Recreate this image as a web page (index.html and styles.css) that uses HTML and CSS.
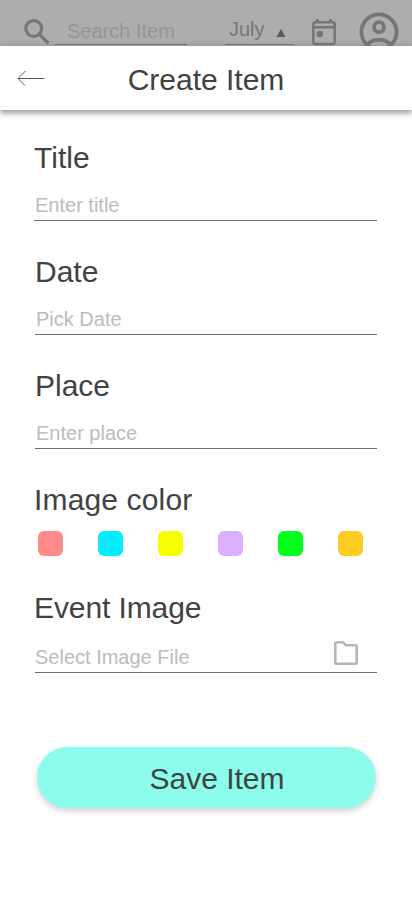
FILE: index.html
```html
<!DOCTYPE html>
<html lang="en">
<head>
<meta charset="utf-8">
<title>Create Item</title>
<link rel="stylesheet" href="styles.css">
</head>
<body>
<div class="topbar">
  <svg class="search-icon" width="26" height="26" viewBox="0 0 26 26"><circle cx="9.7" cy="9.5" r="7.9"/><path d="M15.2 15.2L24.4 24.4"/></svg>
  <div class="search-field">Search Item</div>
  <div class="month"><span>July</span><svg width="10" height="9" viewBox="0 0 10 9"><path d="M5 0L9.5 8H.5z"/></svg></div>
  <svg class="calendar-icon" width="24" height="27" viewBox="0 0 24 27"><rect x="1.3" y="3.3" width="21.4" height="21.8" rx="2"/><path d="M1 8.2H23M5.5 0V4M18.5 0V4"/><circle class="dot" cx="7.8" cy="15.1" r="3.3"/></svg>
  <svg class="user-icon" width="40" height="40" viewBox="0 0 40 40"><circle cx="20" cy="20" r="17.6"/><circle cx="20" cy="15.2" r="5"/><path d="M8 33Q12 27.8 20 27.8T32 33"/></svg>
</div>
<header class="header">
  <svg class="back" width="28" height="16" viewBox="0 0 28 16"><path d="M27.5 8.5H1.2M8.5 1L1 8.5L8 15.5"/></svg>
  <h1>Create Item</h1>
</header>
<main class="form">
  <section class="field field-title"><h2>Title</h2><div class="input">Enter title</div></section>
  <section class="field"><h2>Date</h2><div class="input">Pick Date</div></section>
  <section class="field"><h2>Place</h2><div class="input">Enter place</div></section>
  <section class="colors">
    <h2>Image color</h2>
    <div class="swatches"><i class="coral"></i><i class="cyan"></i><i class="yellow"></i><i class="lilac"></i><i class="green"></i><i class="amber"></i></div>
  </section>
  <section class="field file"><h2>Event Image</h2>
    <div class="input"><span>Select Image File</span><svg width="24" height="24" viewBox="0 0 24 24"><path d="M1.3 2.8Q1.3 1.3 2.8 1.3H9L12 4.3H21.2Q22.7 4.3 22.7 5.8V21.2Q22.7 22.7 21.2 22.7H2.8Q1.3 22.7 1.3 21.2Z"/></svg></div>
  </section>
  <button class="save">Save Item</button>
</main>
</body>
</html>
```
FILE: styles.css
```css
* { box-sizing: border-box; }
body {
  margin: 0;
  height: 915px;
  overflow: hidden;
  background: #fff;
  color: #424242;
  font-family: "Liberation Sans", Arial, sans-serif;
}
svg { display: block; flex: none; fill: none; }
h1, h2 { margin: 0; font-size: 30px; line-height: 30px; font-weight: 400; }

.topbar {
  display: flex;
  align-items: flex-start;
  height: 46px;
  padding-left: 24px;
  overflow: hidden;
  background: linear-gradient(#adadad 0, #adadad 40px, #a6a6a6 46px);
  color: #767676;
  font-size: 20px;
  line-height: 20px;
}
.topbar svg { stroke: #767676; }
.search-icon { margin-top: 19px; stroke-width: 3.2; }
.search-field {
  width: 132px;
  height: 24px;
  margin: 21px 0 0 5px;
  padding-left: 12px;
  border-bottom: 1px solid #767676;
  color: #969696;
}
.month {
  display: flex;
  width: 69px;
  height: 26px;
  margin: 19px 0 0 38px;
  padding-left: 4px;
  border-bottom: 1px solid #767676;
}
.topbar .month svg { margin: 10px 0 0 11px; fill: #5a5a5a; stroke: none; }
.calendar-icon { margin: 19px 0 0 18px; stroke-width: 2.5; }
.calendar-icon .dot { fill: #767676; stroke: none; }
.user-icon { margin: 12px 0 0 23px; stroke-width: 3.8; }

.header {
  display: grid;
  grid-template-columns: 28px 1fr 28px;
  align-items: center;
  height: 64px;
  padding: 0 17px;
  background: #fff;
  box-shadow: 0 3px 6px rgba(0, 0, 0, .42);
}
.header h1 { padding-top: 3px; text-align: center; }
.back { margin-top: -1px; stroke: #555; stroke-width: 1; }

.form { padding: 33px 35px 0; }
.field { margin-bottom: 36px; }
.field .input {
  display: flex;
  justify-content: space-between;
  height: 26px;
  margin-top: 22px;
  padding-left: 1px;
  border-bottom: 1px solid #707070;
  color: #bcbcbc;
  font-size: 20px;
  line-height: 20px;
}
.field-title { margin-left: -1px; }
.colors { height: 108px; margin-left: -1px; }
.colors h2 { letter-spacing: .15px; }
.swatches { display: flex; gap: 35px; margin: 16px 0 0 4px; }
.swatches i { width: 25px; height: 25px; border-radius: 6px; }
.coral { background: #ff8a8a; }
.cyan { background: #00eeff; }
.yellow { background: #f7ff00; }
.lilac { background: #dbb0ff; }
.green { background: #00ff1a; }
.amber { background: #ffcc22; }
.field.file { margin-bottom: 74px; }
.file h2 { margin-left: -1px; letter-spacing: -.1px; }
.file .input { margin-top: 24px; padding-left: 0; }
.file .input svg { margin: -6px 19px 0 0; stroke: #b5b5b5; stroke-width: 2.6; }
.save {
  display: block;
  width: 339px;
  height: 61px;
  margin-left: 2px;
  padding: 3px 0 0 21px;
  border: 0;
  border-radius: 31px;
  background: #8cfdec;
  box-shadow: 0 3px 6px rgba(0, 0, 0, .18);
  color: #424242;
  font: 30px/30px "Liberation Sans", Arial, sans-serif;
}
```
